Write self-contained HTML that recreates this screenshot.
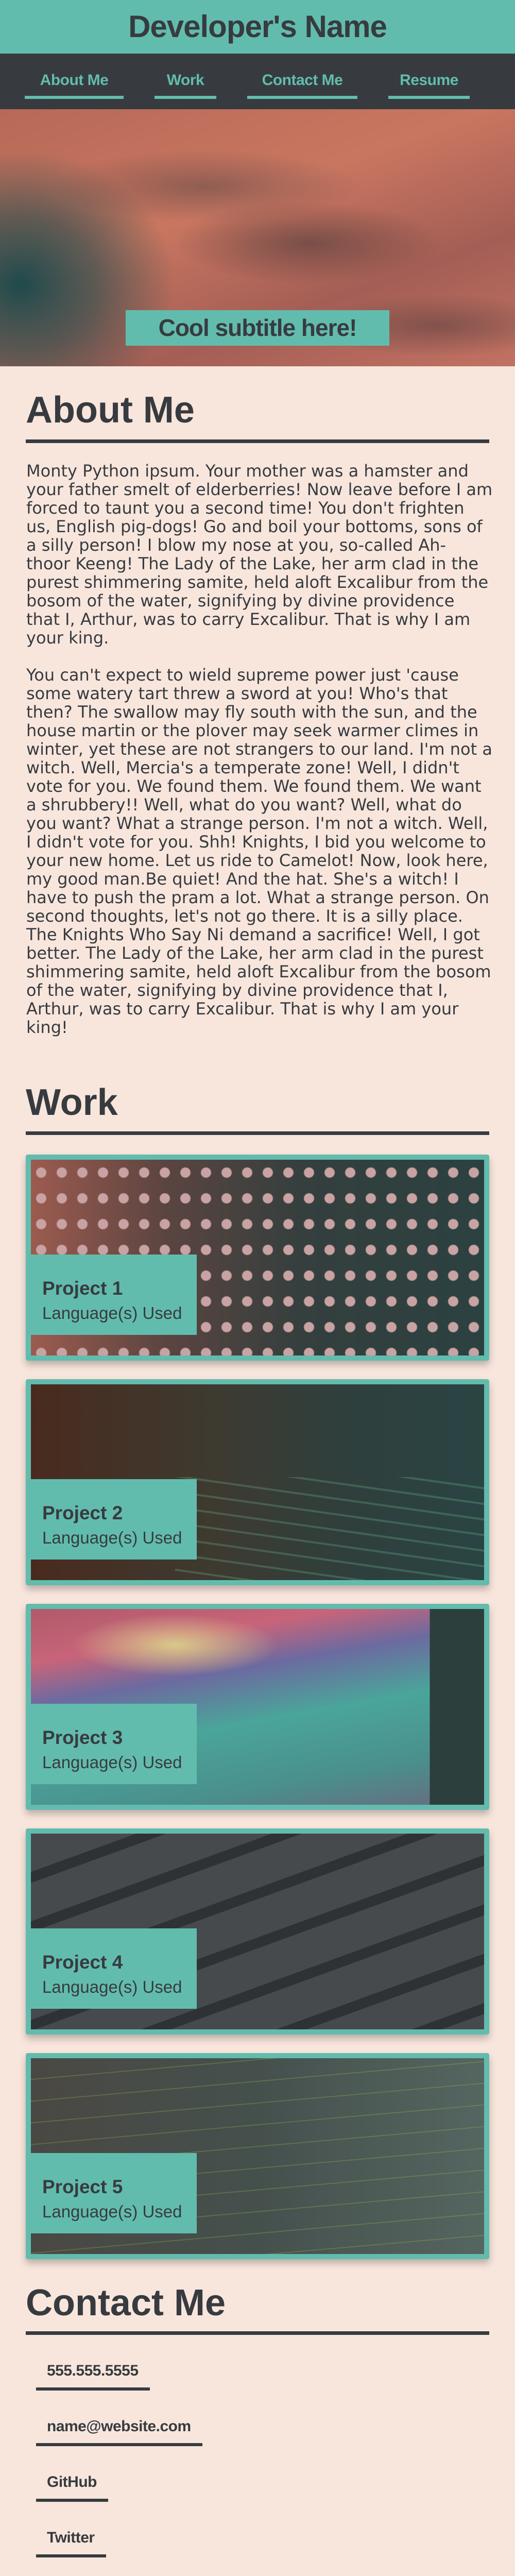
<!DOCTYPE html>
<html><head><meta charset="utf-8">
<style>
*{box-sizing:border-box;margin:0;padding:0}
html,body{width:1000px;height:5112px;overflow:hidden}
body{background:#f8e6dd;font-family:"Liberation Sans",sans-serif;color:#373b3f;position:relative}
.hdr{position:absolute;left:0;top:0;width:1000px;height:104px;background:#62bcae;text-align:center;font-weight:bold;font-size:60px;line-height:104px;letter-spacing:-1px}
.nav{position:absolute;left:0;top:104px;width:1000px;height:108px;background:#373b3f}
.nav a{position:absolute;top:30px;height:58px;border-bottom:6px solid #62bcae;color:#62bcae;font-weight:bold;font-size:30px;text-align:center;text-decoration:none;line-height:44px;letter-spacing:-0.5px}
.hero{position:absolute;left:0;top:212px;width:1000px;height:499px;
background:radial-gradient(ellipse 300px 260px at 40px 340px,#1f4a4c 0%,rgba(31,74,76,.6) 50%,rgba(31,74,76,0) 100%),
radial-gradient(ellipse 260px 80px at 600px 260px,rgba(80,60,60,.6),rgba(80,60,60,0)),
radial-gradient(ellipse 300px 70px at 400px 150px,rgba(90,70,70,.5),rgba(90,70,70,0)),
radial-gradient(ellipse 250px 60px at 850px 420px,rgba(80,60,60,.5),rgba(80,60,60,0)),
linear-gradient(160deg,#b76a58 0%,#c97660 40%,#a45e55 70%,#c27262 100%)}
.sub{position:absolute;left:244px;top:390px;width:512px;height:69px;background:#62bcae;font-weight:bold;font-size:46px;line-height:69px;text-align:center;letter-spacing:-1px}
h2{position:absolute;left:50px;width:900px;font-size:72px;font-weight:bold;line-height:80px;border-bottom:7px solid #373b3f}
.p{position:absolute;left:51px;width:940px;font-size:32px;line-height:36px;font-family:"DejaVu Sans","Liberation Sans",sans-serif;white-space:nowrap}
.card{position:absolute;left:50px;width:900px;height:400px;background:#62bcae;border-radius:4px;box-shadow:0 8px 14px rgba(0,0,0,.25);padding:10px}
.img{position:relative;width:880px;height:380px;overflow:hidden}
.lbl{position:absolute;left:0;top:184px;width:322px;height:156px;background:#62bcae;padding:46px 0 0 22px}
.lbl b{display:block;font-size:37px;line-height:40px}
.lbl span{display:block;font-size:33px;line-height:48px;margin-top:4px}
.c a{position:absolute;left:70px;padding:0 22px 0 21px;font-weight:bold;font-size:30px;line-height:40px;height:58px;border-bottom:6px solid #373b3f;color:#373b3f;text-decoration:none;letter-spacing:-0.5px}
</style></head><body>
<div class="hdr">Developer's Name</div>
<div class="nav">
<a style="left:48px;width:192px">About Me</a>
<a style="left:300px;width:120px">Work</a>
<a style="left:480px;width:214px">Contact Me</a>
<a style="left:754px;width:158px">Resume</a>
</div>
<div class="hero"><div class="sub">Cool subtitle here!</div></div>

<h2 style="top:756px;height:104px">About Me</h2>
<div class="p" style="top:896px">Monty Python ipsum. Your mother was a hamster and<br>your father smelt of elderberries! Now leave before I am<br>forced to taunt you a second time! You don't frighten<br>us, English pig-dogs! Go and boil your bottoms, sons of<br>a silly person! I blow my nose at you, so-called Ah-<br>thoor Keeng! The Lady of the Lake, her arm clad in the<br>purest shimmering samite, held aloft Excalibur from the<br>bosom of the water, signifying by divine providence<br>that I, Arthur, was to carry Excalibur. That is why I am<br>your king.</div>
<div class="p" style="top:1292px">You can't expect to wield supreme power just 'cause<br>some watery tart threw a sword at you! Who's that<br>then? The swallow may fly south with the sun, and the<br>house martin or the plover may seek warmer climes in<br>winter, yet these are not strangers to our land. I'm not a<br>witch. Well, Mercia's a temperate zone! Well, I didn't<br>vote for you. We found them. We found them. We want<br>a shrubbery!! Well, what do you want? Well, what do<br>you want? What a strange person. I'm not a witch. Well,<br>I didn't vote for you. Shh! Knights, I bid you welcome to<br>your new home. Let us ride to Camelot! Now, look here,<br>my good man.Be quiet! And the hat. She's a witch! I<br>have to push the pram a lot. What a strange person. On<br>second thoughts, let's not go there. It is a silly place.<br>The Knights Who Say Ni demand a sacrifice! Well, I got<br>better. The Lady of the Lake, her arm clad in the purest<br>shimmering samite, held aloft Excalibur from the bosom<br>of the water, signifying by divine providence that I,<br>Arthur, was to carry Excalibur. That is why I am your<br>king!</div>

<h2 style="top:2100px;height:103px">Work</h2>

<div class="card" style="top:2241px"><div class="img" style="background:radial-gradient(circle at 50% 50%,#c9a3a3 0 28%,transparent 34%) 0 0/40px 50px,linear-gradient(90deg,#9c5b4f 0%,#5a4440 30%,#343f3e 60%,#2b4140 100%)">
<div class="lbl"><b>Project 1</b><span>Language(s) Used</span></div></div></div>

<div class="card" style="top:2677px"><div class="img" style="background:repeating-linear-gradient(8deg,transparent 0 18px,rgba(120,200,150,.25) 18px 22px,transparent 22px 30px) 280px 180px/600px 200px no-repeat,linear-gradient(90deg,#4a2a1e 0%,#3d3a30 40%,#2f3f3d 70%,#2a4443 100%)">
<div class="lbl"><b>Project 2</b><span>Language(s) Used</span></div></div></div>

<div class="card" style="top:3113px"><div class="img" style="background:linear-gradient(90deg,transparent 0 88%,#2c3f3c 88%),radial-gradient(ellipse 200px 60px at 280px 70px,#d9c98a,transparent),linear-gradient(170deg,#b05a6a 0%,#c8647a 20%,#6c6aa0 35%,#4aa59a 55%,#4a8f8c 80%,#6a6a80 100%)">
<div class="lbl"><b>Project 3</b><span>Language(s) Used</span></div></div></div>

<div class="card" style="top:3549px"><div class="img" style="background:repeating-linear-gradient(160deg,#474a4d 0 70px,#2f3235 70px 90px),linear-gradient(90deg,#5a4540,#3e4346)">
<div class="lbl"><b>Project 4</b><span>Language(s) Used</span></div></div></div>

<div class="card" style="top:3985px"><div class="img" style="background:repeating-linear-gradient(175deg,transparent 0 40px,rgba(160,200,80,.25) 40px 42px),linear-gradient(90deg,#4a4843 0%,#45504d 50%,#556560 100%)">
<div class="lbl"><b>Project 5</b><span>Language(s) Used</span></div></div></div>

<h2 style="top:4430px;height:102px">Contact Me</h2>
<div class="c">
<a style="top:4582px">555.555.5555</a>
<a style="top:4690px">name@website.com</a>
<a style="top:4798px">GitHub</a>
<a style="top:4906px">Twitter</a>
<a style="top:5014px">LinkedIn</a>
</div>
</body></html>
